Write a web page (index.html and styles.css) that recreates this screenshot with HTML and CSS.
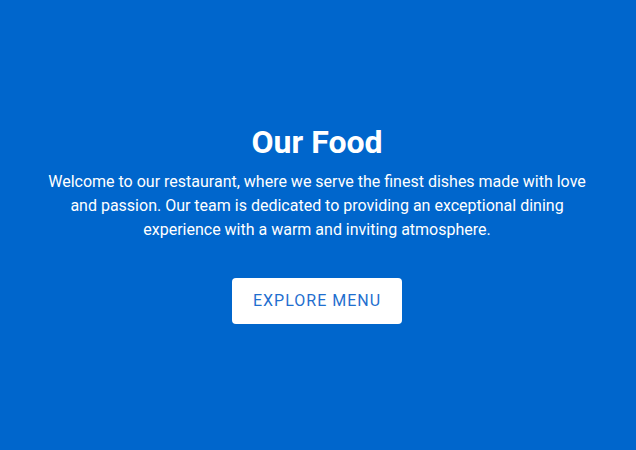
FILE: index.html
```html
<!DOCTYPE html>
<html lang="en">
<head>
<meta charset="utf-8">
<title>Our Food</title>
<link rel="stylesheet" href="styles.css">
</head>
<body>
<section class="hero">
  <h1 class="hero-title">Our Food</h1>
  <p class="hero-text">Welcome to our restaurant, where we serve the finest dishes made with love and passion. Our team is dedicated to providing an exceptional dining experience with a warm and inviting atmosphere.</p>
  <a class="hero-button" href="#">EXPLORE MENU</a>
</section>
</body>
</html>
```
FILE: styles.css
```css
html, body {
  margin: 0;
  padding: 0;
  height: 100%;
}
body {
  background: #0066cc;
  font-family: Roboto, "Liberation Sans", sans-serif;
  color: #ffffff;
}
.hero {
  min-height: 100vh;
  box-sizing: border-box;
  display: flex;
  flex-direction: column;
  align-items: center;
  justify-content: center;
  text-align: center;
  padding: 0 42px 2px 40px;
}
.hero-title {
  margin: 0 0 10px;
  font-size: 32px;
  font-weight: 700;
  line-height: 36px;
}
.hero-text {
  margin: 0 0 36px;
  max-width: 560px;
  font-size: 16px;
  line-height: 24px;
}
.hero-button {
  display: inline-block;
  width: 170px;
  height: 46px;
  box-sizing: border-box;
  line-height: 46px;
  background: #ffffff;
  color: #1f6fcf;
  border-radius: 4px;
  font-size: 16px;
  letter-spacing: 1px;
  text-decoration: none;
}
```
